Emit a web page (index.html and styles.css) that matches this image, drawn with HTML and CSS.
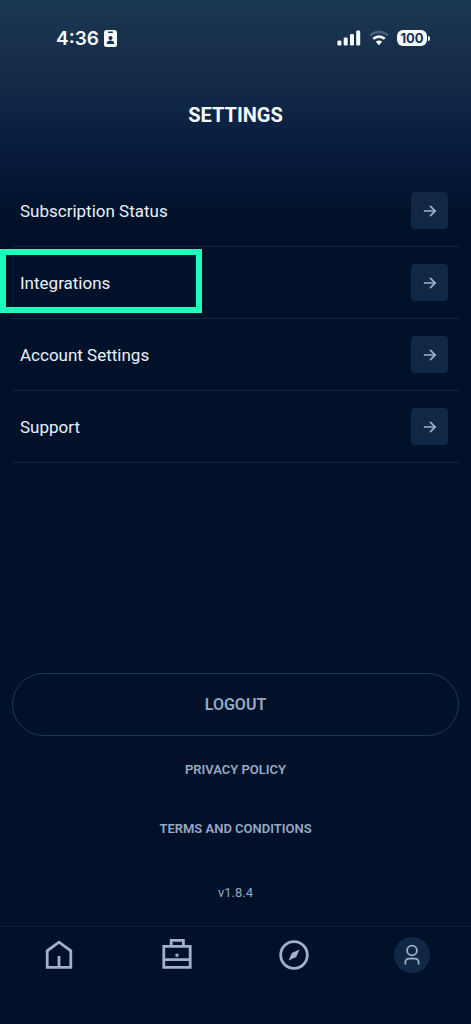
FILE: index.html
```html
<!DOCTYPE html>
<html lang="en">
<head>
<meta charset="utf-8">
<meta name="viewport" content="width=device-width, initial-scale=1">
<title>Settings</title>
<link rel="stylesheet" href="styles.css">
</head>
<body class="screen">
  <div class="status-bar">
    <div class="status-group status-left">
      <span class="clock">4:36</span>
      <svg class="badge-icon" width="13" height="17" viewBox="0 0 13 17" aria-hidden="true">
        <rect width="13" height="17" rx="2.5" fill="#f5fbff"/>
        <rect x="4" y="1.6" width="5" height="1.4" rx=".7" fill="#17304c"/>
        <circle cx="6.5" cy="8" r="2" fill="#17304c"/>
        <path d="M2.8 14v-.8c0-1.8 1.7-2.6 3.7-2.6s3.7.8 3.7 2.6v.8z" fill="#17304c"/>
      </svg>
    </div>
    <div class="status-group status-right">
      <svg width="24" height="16" viewBox="0 0 24 16" fill="#f5fbff" aria-hidden="true">
        <rect x="0.4" y="10.4" width="4" height="5.1" rx="1.3"/>
        <rect x="6.7" y="7.4" width="4" height="8.1" rx="1.3"/>
        <rect x="13" y="4" width="4" height="11.5" rx="1.3"/>
        <rect x="19.2" y="0.4" width="4" height="15.1" rx="1.3"/>
      </svg>
      <svg width="20" height="16" viewBox="0 0 20 16" aria-hidden="true">
        <path d="M1.3 5.4C6 .8 14 .8 18.7 5.4" fill="none" stroke="#49627b" stroke-width="2.6"/>
        <path d="M4.3 8.9c3.1-3.1 8.3-3.1 11.4 0" fill="none" stroke="#f5fbff" stroke-width="2.7"/>
        <path d="M6.8 11.8c1.8-1.8 4.6-1.8 6.4 0L10 15.2z" fill="#f5fbff"/>
      </svg>
      <div class="battery"><span class="battery-level">100</span><span class="battery-tip"></span></div>
    </div>
  </div>

  <h1 class="title">SETTINGS</h1>

  <svg class="symbols" aria-hidden="true">
    <symbol id="arrow" viewBox="0 0 16 16">
      <path d="M1.8 8h11.5M8 2.8 13.2 8 8 13.2" fill="none" stroke="currentColor" stroke-width="1.7"/>
    </symbol>
  </svg>

  <main class="content">
    <nav class="menu" aria-label="Settings">
      <a class="row" href="#subscription"><span>Subscription Status</span><span class="go"><svg class="arrow"><use href="#arrow"/></svg></span></a>
      <a class="row highlighted" href="#integrations"><span>Integrations</span><span class="go"><svg class="arrow"><use href="#arrow"/></svg></span></a>
      <a class="row" href="#account"><span>Account Settings</span><span class="go"><svg class="arrow"><use href="#arrow"/></svg></span></a>
      <a class="row" href="#support"><span>Support</span><span class="go"><svg class="arrow"><use href="#arrow"/></svg></span></a>
    </nav>

    <footer class="footer">
      <button class="logout" type="button">LOGOUT</button>
      <a class="legal" href="#privacy">PRIVACY POLICY</a>
      <a class="legal" href="#terms">TERMS AND CONDITIONS</a>
      <span class="version">v1.8.4</span>
    </footer>
  </main>

  <nav class="tabs" aria-label="Main">
    <a class="tab" href="#home" aria-label="Home">
      <svg width="36" height="36" viewBox="0 0 36 36" fill="none" stroke="currentColor" stroke-width="2.8">
        <path d="M6.2 30.4V13.8L18 5.2l11.8 8.6v16.6zM18 19v11.4"/>
      </svg>
    </a>
    <a class="tab" href="#toolbox" aria-label="Toolbox">
      <svg width="36" height="36" viewBox="0 0 36 36" fill="none" stroke="currentColor" stroke-width="2.8">
        <path d="M4.8 9.4h26.4v21H4.8zM4.8 22.6h26.4M12.2 9.4V3.4h12.2v6"/>
        <path d="M16.5 18.2h3" stroke-width="3"/>
      </svg>
    </a>
    <a class="tab" href="#explore" aria-label="Explore">
      <svg width="36" height="36" viewBox="0 0 36 36" fill="none">
        <circle cx="18" cy="18" r="13.3" stroke="currentColor" stroke-width="2.8"/>
        <path d="M23.5 12.5 20.3 20 12.6 23.5 15.8 16z" fill="currentColor"/>
      </svg>
    </a>
    <a class="tab" href="#profile" aria-label="Profile" aria-current="page">
      <span class="profile">
        <svg width="36" height="36" viewBox="0 0 36 36" fill="none" stroke="currentColor" stroke-width="1.8">
          <circle cx="18" cy="13.5" r="4.9"/>
          <path d="M11.4 27.4v-2.2a3.5 3.5 0 0 1 3.5-3.5h6.2a3.5 3.5 0 0 1 3.5 3.5v2.2"/>
        </svg>
      </span>
    </a>
  </nav>
</body>
</html>
```
FILE: styles.css
```css
*,
*::after {
  box-sizing: border-box;
}

.screen {
  margin: 0;
  min-height: 100vh;
  display: flex;
  flex-direction: column;
  background: #001129 linear-gradient(#1b3851 0, #162c4a 65px, #0d2344 120px, #06193a 165px, #001129 215px) no-repeat;
  color: #e9f1fb;
  font-family: Roboto, "Liberation Sans", sans-serif;
}

.symbols {
  display: none;
}

.status-bar {
  display: flex;
  justify-content: space-between;
  padding: 26px 41px 0 56px;
  height: 76px;
  color: #f5fbff;
  font-family: Inter, "Liberation Sans", sans-serif;
}

.status-group {
  display: flex;
  align-items: center;
  height: 24px;
}

.status-left {
  gap: 5px;
}

.status-right {
  gap: 8px;
}

.clock {
  font-size: 19px;
  font-weight: 600;
}

.battery {
  display: flex;
  align-items: center;
  gap: 1px;
}

.battery-level {
  width: 30px;
  border-radius: 6px;
  background: #f5fbff;
  color: #17304c;
  font-size: 13px;
  font-weight: 700;
  line-height: 16px;
  text-align: center;
}

.battery-tip {
  width: 2px;
  height: 5px;
  border-radius: 0 2px 2px 0;
  background: #f5fbff;
}

.title {
  margin: 0;
  padding-top: 26px;
  height: 99px;
  font-size: 20px;
  font-weight: 700;
  line-height: 26px;
  text-align: center;
  color: #f5fbff;
}

.content {
  flex: 1;
  display: flex;
  flex-direction: column;
  justify-content: space-between;
  padding: 0 12px;
}

.row {
  position: relative;
  display: flex;
  align-items: center;
  justify-content: space-between;
  height: 72px;
  padding: 0 11px 0 8px;
  border-bottom: 1px solid #12263f;
  color: inherit;
  font-size: 17px;
  line-height: 24px;
  text-decoration: none;
}

.highlighted::after {
  content: "";
  position: absolute;
  top: 2px;
  left: -12px;
  width: 202px;
  height: 64px;
  border: 6px solid #20fcba;
}

.go {
  display: grid;
  place-items: center;
  width: 37px;
  height: 37px;
  border-radius: 4px;
  background: #102846;
  color: #9fb3cf;
}

.arrow {
  width: 16px;
  height: 16px;
}

.footer {
  display: flex;
  flex-direction: column;
  align-items: center;
  padding: 24px 0;
  color: #97a9c4;
}

.logout {
  align-self: stretch;
  height: 63px;
  margin-bottom: 24px;
  border: 1px solid #1d3858;
  border-radius: 32px;
  background: none;
  color: inherit;
  font: 600 16px/20px Roboto, "Liberation Sans", sans-serif;
}

.legal {
  margin-bottom: 40px;
  color: inherit;
  font-size: 13px;
  font-weight: 600;
  line-height: 19px;
  text-decoration: none;
}

.version {
  margin-top: 6px;
  font-size: 13px;
  line-height: 18px;
}

.tabs {
  display: grid;
  grid-template-columns: repeat(4, 1fr);
  height: 98px;
  padding-top: 10px;
  border-top: 1px solid #0d2039;
}

.tab {
  display: flex;
  justify-content: center;
  align-items: flex-start;
  color: #9fb1cd;
}

.profile {
  display: flex;
  border-radius: 50%;
  background: #102846;
}
```
